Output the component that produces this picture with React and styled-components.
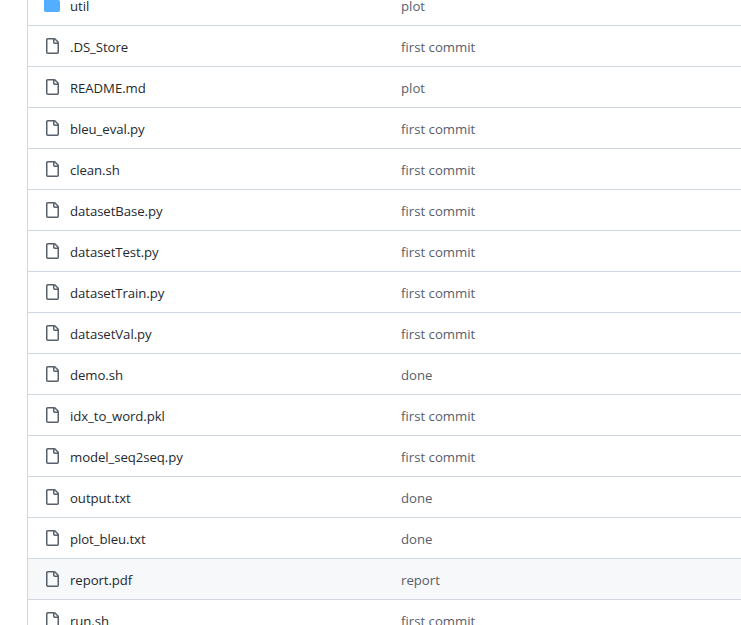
import React from "react";
import styled, { createGlobalStyle } from "styled-components";

const GlobalStyle = createGlobalStyle`
  html, body {
    margin: 0;
    padding: 0;
    background: #fff;
    overflow: hidden;
  }
`;

const Page = styled.div`
  height: 625px;
  overflow: hidden;
  padding-left: 27px;
  font-family: "Open Sans", "Noto Sans", sans-serif;
  font-size: 13.2px;
`;

const FileList = styled.div`
  margin-top: -15px;
  border-left: 1px solid #d0d7de;
`;

const Row = styled.div`
  display: grid;
  grid-template-columns: 16px 321px 1fr;
  column-gap: 10px;
  align-items: center;
  height: 40px;
  padding-left: 16px;
  border-bottom: 1px solid #d0d7de;
  background: ${(p) => (p.$hover ? "#f6f8fa" : "#fff")};
`;

const Icon = styled.svg`
  display: block;
  width: 16px;
  height: 16px;
  fill: ${(p) => (p.$folder ? "#54aeff" : "#57606a")};
`;

const Name = styled.span`
  padding-top: 2px;
  color: #24292f;
  letter-spacing: -0.07px;
`;

const Message = styled.span`
  padding-top: 2px;
  color: #57606a;
`;

const FILE_PATH =
  "M2 1.75C2 .784 2.784 0 3.75 0h6.586c.464 0 .909.184 1.237.513l2.914 2.914c.329.328.513.773.513 1.237v9.586A1.75 1.75 0 0 1 13.25 16h-9.5A1.75 1.75 0 0 1 2 14.25Zm1.75-.25a.25.25 0 0 0-.25.25v12.5c0 .138.112.25.25.25h9.5a.25.25 0 0 0 .25-.25V6h-2.75A1.75 1.75 0 0 1 9 4.25V1.5Zm6.75.062V4.25c0 .138.112.25.25.25h2.688l-.011-.013-2.914-2.914-.013-.011Z";
const FOLDER_PATH =
  "M1.75 1A1.75 1.75 0 0 0 0 2.75v10.5C0 14.216.784 15 1.75 15h12.5A1.75 1.75 0 0 0 16 13.25v-8.5A1.75 1.75 0 0 0 14.25 3H7.5a.25.25 0 0 1-.2-.1l-.9-1.2C6.07 1.26 5.55 1 5 1H1.75Z";

const files = [
  { name: "util", message: "plot", folder: true },
  { name: ".DS_Store", message: "first commit" },
  { name: "README.md", message: "plot" },
  { name: "bleu_eval.py", message: "first commit" },
  { name: "clean.sh", message: "first commit" },
  { name: "datasetBase.py", message: "first commit" },
  { name: "datasetTest.py", message: "first commit" },
  { name: "datasetTrain.py", message: "first commit" },
  { name: "datasetVal.py", message: "first commit" },
  { name: "demo.sh", message: "done" },
  { name: "idx_to_word.pkl", message: "first commit" },
  { name: "model_seq2seq.py", message: "first commit" },
  { name: "output.txt", message: "done" },
  { name: "plot_bleu.txt", message: "done" },
  { name: "report.pdf", message: "report", hover: true },
  { name: "run.sh", message: "first commit" },
];

const App = () => (
  <Page>
    <GlobalStyle />
    <FileList>
      {files.map((file) => (
        <Row key={file.name} $hover={file.hover}>
          <Icon viewBox="0 0 16 16" $folder={file.folder}>
            <path d={file.folder ? FOLDER_PATH : FILE_PATH} />
          </Icon>
          <Name>{file.name}</Name>
          <Message>{file.message}</Message>
        </Row>
      ))}
    </FileList>
  </Page>
);

export default App;
